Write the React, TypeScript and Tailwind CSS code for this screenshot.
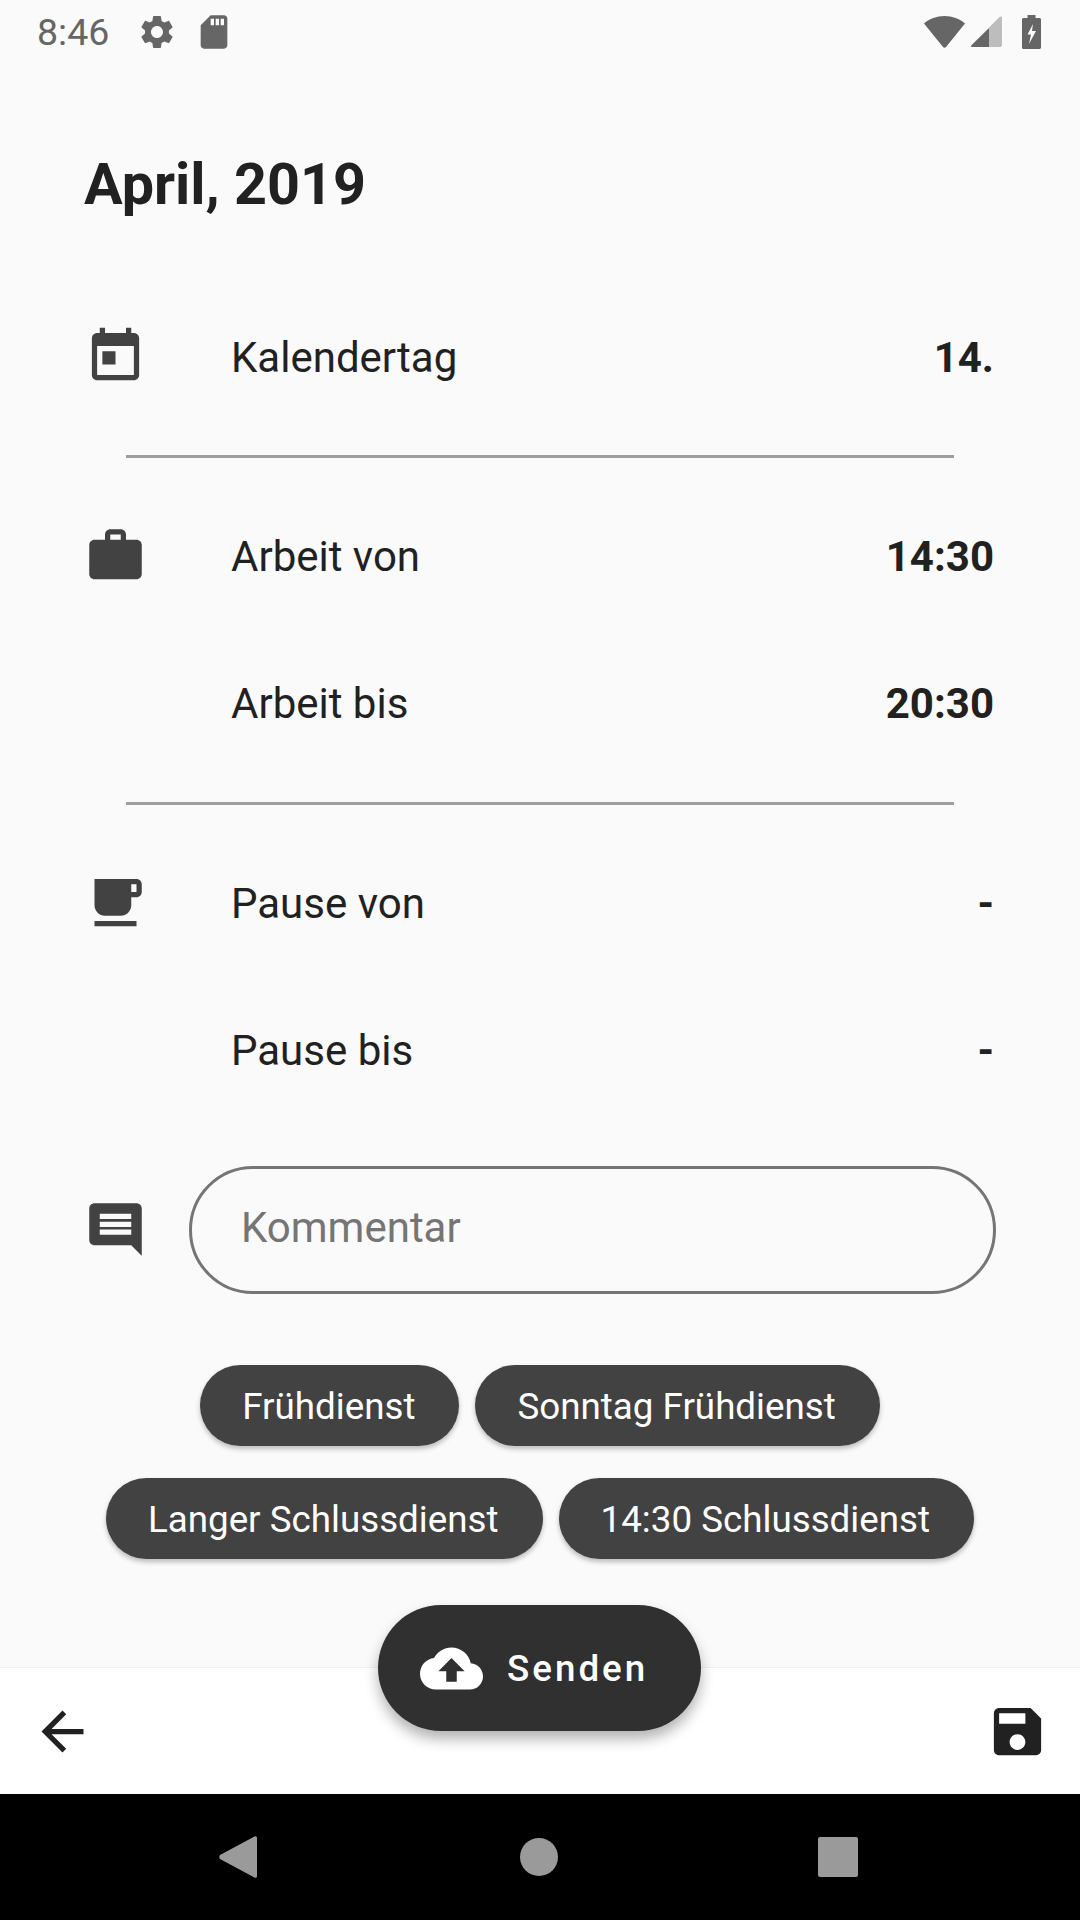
import React from 'react';

const Icon = ({ d, className }: { d: string; className: string }) => (
  <svg viewBox="0 0 24 24" fill="currentColor" className={className}>
    <path d={d} />
  </svg>
);

const paths = {
  today: 'M19 3h-1V1h-2v2H8V1H6v2H5c-1.11 0-1.99.9-1.99 2L3 19c0 1.1.89 2 2 2h14c1.1 0 2-.9 2-2V5c0-1.1-.9-2-2-2zm0 16H5V8h14v11zM7 10h5v5H7z',
  work: 'M20 6h-4V4c0-1.11-.89-2-2-2h-4c-1.11 0-2 .89-2 2v2H4c-1.11 0-1.99.89-1.99 2L2 19c0 1.11.89 2 2 2h16c1.11 0 2-.89 2-2V8c0-1.11-.89-2-2-2zm-6 0h-4V4h4v2z',
  coffee: 'M20 3H4v10c0 2.21 1.79 4 4 4h6c2.21 0 4-1.79 4-4v-3h2c1.11 0 2-.9 2-2V5c0-1.11-.89-2-2-2zm0 5h-2V5h2v3zM4 19h16v2H4z',
  comment: 'M20 2H4c-1.1 0-2 .9-2 2v12c0 1.1.9 2 2 2h14l4 4V4c0-1.1-.9-2-2-2zm-2 12H6v-2h12v2zm0-3H6V9h12v2zm0-3H6V6h12v2z',
  save: 'M17 3H5c-1.11 0-2 .9-2 2v14c0 1.1.89 2 2 2h14c1.1 0 2-.9 2-2V7l-4-4zm-5 16c-1.66 0-3-1.34-3-3s1.34-3 3-3 3 1.34 3 3-1.34 3-3 3zm3-10H5V5h10v4z',
  back: 'M20 11H7.83l5.59-5.59L12 4l-8 8 8 8 1.41-1.41L7.83 13H20v-2z',
  cloud: 'M19.35 10.04C18.67 6.59 15.64 4 12 4 9.11 4 6.6 5.64 5.35 8.04 2.34 8.36 0 10.91 0 14c0 3.31 2.69 6 6 6h13c2.76 0 5-2.24 5-5 0-2.64-2.05-4.78-4.65-4.96zM14 13v4h-4v-4H7l5-5 5 5h-3z',
  gear: 'M19.14 12.94c.04-.3.06-.61.06-.94 0-.32-.02-.64-.07-.94l2.03-1.58c.18-.14.23-.41.12-.61l-1.92-3.32c-.12-.22-.37-.29-.59-.22l-2.39.96c-.5-.38-1.03-.7-1.62-.94l-.36-2.54c-.04-.24-.24-.41-.48-.41h-3.84c-.24 0-.43.17-.47.41l-.36 2.54c-.59.24-1.13.57-1.62.94l-2.39-.96c-.22-.08-.47 0-.59.22L2.74 8.87c-.12.21-.08.47.12.61l2.03 1.58c-.05.3-.09.63-.09.94s.02.64.07.94l-2.03 1.58c-.18.14-.23.41-.12.61l1.92 3.32c.12.22.37.29.59.22l2.39-.96c.5.38 1.03.7 1.62.94l.36 2.54c.05.24.24.41.48.41h3.84c.24 0 .44-.17.47-.41l.36-2.54c.59-.24 1.13-.56 1.62-.94l2.39.96c.22.08.47 0 .59-.22l1.92-3.32c.12-.22.07-.47-.12-.61l-2.01-1.58zM12 15.6c-1.98 0-3.6-1.62-3.6-3.6s1.62-3.6 3.6-3.6 3.6 1.62 3.6 3.6-1.62 3.6-3.6 3.6z',
  sd: 'M18 2h-8L4.02 8 4 20c0 1.1.9 2 2 2h12c1.1 0 2-.9 2-2V4c0-1.1-.9-2-2-2zm-6 6h-2V4h2v4zm3 0h-2V4h2v4zm3 0h-2V4h2v4z',
};

const FONT = "font-['Roboto',sans-serif]";

const Row = ({ icon, label, value }: { icon?: string; label: string; value: string }) => (
  <div className="flex h-[147px] items-center pl-[84px] pr-[86px] pt-[4px]">
    <div className="h-[63px] w-[63px] shrink-0 -translate-y-[2px] text-[#424242]">
      {icon && <Icon d={icon} className="h-[63px] w-[63px]" />}
    </div>
    <span className="ml-[84px] text-[42px] leading-none text-[#212121]">{label}</span>
    <span className="ml-auto text-[42px] font-bold leading-none text-[#212121]">{value}</span>
  </div>
);

const Divider = () => <div className="mx-[126px] h-[3px] bg-[#9e9e9e]" />;

const Chip = ({ label }: { label: string }) => (
  <button className="flex h-[81px] items-center rounded-full bg-[#424242] pl-[42px] pr-[44px] pt-[3px] text-[36.75px] text-white shadow-[0_3px_5px_rgba(0,0,0,0.25)]">
    {label}
  </button>
);

export default function App() {
  return (
    <div className={`flex h-[1920px] w-[1080px] flex-col overflow-hidden bg-[#fafafa] ${FONT}`}>
      {/* status bar */}
      <div className="flex h-[63px] shrink-0 items-center pl-[37px] pr-[39px] text-[#666666]">
        <span className="pt-[2px] text-[37.5px] leading-none">8:46</span>
        <Icon d={paths.gear} className="ml-[28px] h-[40px] w-[40px]" />
        <Icon d={paths.sd} className="ml-[17px] h-[40px] w-[40px]" />
        <div className="ml-auto flex items-center">
          <svg viewBox="0 0 41 32" className="h-[32px] w-[41px]" fill="currentColor">
            <path d="M20.5 0C12.5 0 5.5 2.8 0 7.5L19 31c.8 1 2.2 1 3 0L41 7.5C35.5 2.8 28.5 0 20.5 0z" />
          </svg>
          <svg viewBox="0 0 31 31" className="ml-[6px] h-[31px] w-[31px]">
            <path d="M29 0.5 31 1v28.500l-1.500 1.500H18V11.500z" fill="#bdbdbd" />
            <path d="M18 12V31H1c-1 0-1.300-1-.6-1.700z" fill="currentColor" />
          </svg>
          <svg viewBox="0 0 19 34" className="ml-[20px] h-[34px] w-[19px]" fill="currentColor">
            <path fillRule="evenodd" d="M5.500 0h8v3H17.500c.8 0 1.500.7 1.500 1.500v28c0 .8-.7 1.500-1.500 1.500H1.500C.7 34 0 33.300 0 32.500v-28C0 3.700.7 3 1.500 3H5.500zM11 9 5.500 19.500H9L7 29l7-13h-4z" />
          </svg>
        </div>
      </div>

      <h1 className="mt-[88px] pl-[84px] text-[57.5px] font-bold leading-[68px] text-[#212121]">April, 2019</h1>

      <div className="mt-[63.5px]">
        <Row icon={paths.today} label="Kalendertag" value="14." />
      </div>
      <div className="mt-[25px]">
        <Divider />
      </div>
      <div className="mt-[24px]">
        <Row icon={paths.work} label="Arbeit von" value="14:30" />
        <Row label="Arbeit bis" value="20:30" />
      </div>
      <div className="mt-[26px]">
        <Divider />
      </div>
      <div className="mt-[24px]">
        <Row icon={paths.coffee} label="Pause von" value="-" />
        <Row label="Pause bis" value="-" />
      </div>

      <div className="mt-[43px] flex items-center pl-[84px] pr-[84px]">
        <Icon d={paths.comment} className="h-[63px] w-[63px] shrink-0 text-[#424242]" />
        <input
          placeholder="Kommentar"
          className="ml-[42px] h-[128px] flex-1 rounded-full border-[3px] border-[#757575] bg-transparent pb-[5px] pl-[49px] text-[42px] outline-none placeholder:text-[#757575]"
        />
      </div>

      <div className="mt-[71px] flex flex-wrap justify-center gap-x-[16px] gap-y-[32px]">
        <Chip label="Frühdienst" />
        <Chip label="Sonntag Frühdienst" />
        <Chip label="Langer Schlussdienst" />
        <Chip label="14:30 Schlussdienst" />
      </div>

      {/* bottom bar */}
      <div className="relative mt-auto flex h-[127px] shrink-0 items-center justify-between border-t border-[#f0f0f0] bg-white pl-[31px] pr-[31px] text-[#212121]">
        <Icon d={paths.back} className="h-[63px] w-[63px]" />
        <Icon d={paths.save} className="h-[63px] w-[63px]" />
        <button className="absolute left-[378px] top-[-63px] flex h-[126px] w-[323px] items-center rounded-full bg-[#303030] pl-[42px] pt-[2px] text-white shadow-[0_8px_14px_rgba(0,0,0,0.3)]">
          <Icon d={paths.cloud} className="h-[63px] w-[63px] -translate-y-[1px]" />
          <span className="ml-[24px] text-[36.75px] font-medium tracking-[3px]">Senden</span>
        </button>
      </div>

      {/* android nav bar */}
      <div className="flex h-[126px] shrink-0 items-center bg-black pl-[219px]">
        <svg viewBox="0 0 38 42" className="h-[42px] w-[38px]" fill="#9a9a9a">
          <path d="M1 19 35 .7c1-1 3-.7 3 1v38.600c0 1.700-2 2-3 1L1 23c-1-1.300-1-2.700 0-4z" />
        </svg>
        <div className="ml-[263px] h-[38px] w-[38px] rounded-full bg-[#9a9a9a]" />
        <div className="ml-[260px] h-[40px] w-[40px] rounded-[2px] bg-[#9a9a9a]" />
      </div>
    </div>
  );
}
